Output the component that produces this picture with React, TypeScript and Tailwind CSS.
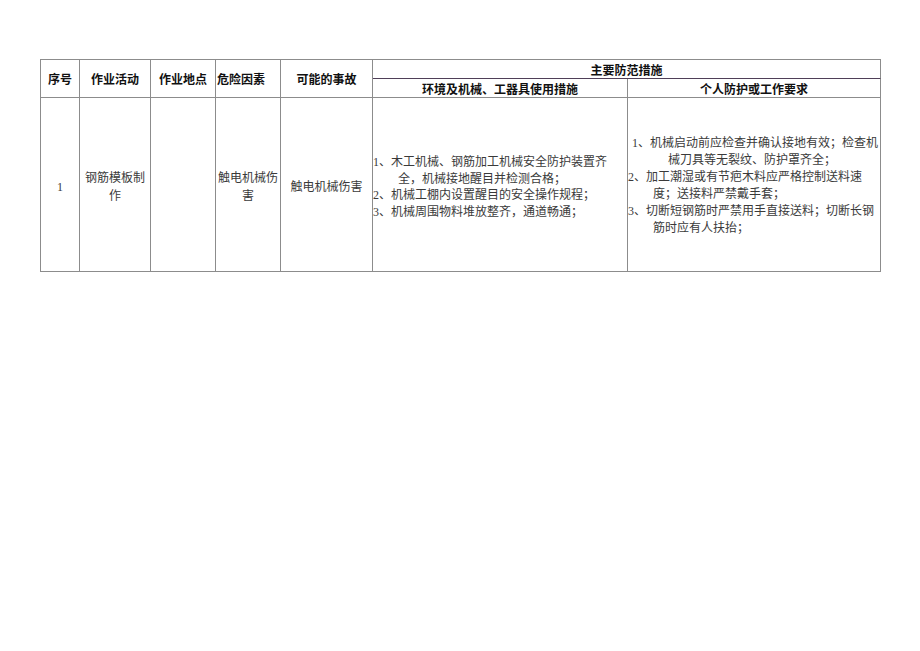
const cell = 'border-r border-b border-[#8c8c8c]';
const head = 'font-["Noto_Sans_CJK_SC",sans-serif] font-bold text-[12px] text-[#111]';
const body = 'font-["Liberation_Serif","Noto_Sans_CJK_SC",serif] text-[12px] text-[#3a3a3a]';

const envLines: [string, string][] = [
  ['1、木工机械、钢筋加工机械安全防护装置齐', 'pl-0'],
  ['全，机械接地醒目并检测合格；', 'pl-[25px]'],
  ['2、机械工棚内设置醒目的安全操作规程；', 'pl-0'],
  ['3、机械周围物料堆放整齐，通道畅通；', 'pl-0'],
];

const personLines: [string, string][] = [
  ['1、机械启动前应检查并确认接地有效；检查机', 'pl-[4px]'],
  ['械刀具等无裂纹、防护罩齐全；', 'pl-[40px]'],
  ['2、加工潮湿或有节疤木料应严格控制送料速', 'pl-0'],
  ['度；送接料严禁戴手套；', 'pl-[25px]'],
  ['3、切断短钢筋时严禁用手直接送料；切断长钢', 'pl-0'],
  ['筋时应有人扶抬；', 'pl-[25px]'],
];

const App = () => {
  return (
    <div className="min-h-screen bg-white pl-[40px] pt-[59px]">
      <div className="grid w-[841px] grid-cols-[39px_71px_65px_65px_92px_255px_253px] grid-rows-[19px_19px_174px] border-l border-t border-[#8c8c8c]">
        {/* header */}
        <div className={`${cell} ${head} row-span-2 flex items-center justify-center`}>序号</div>
        <div className={`${cell} ${head} row-span-2 flex items-center justify-center`}>作业活动</div>
        <div className={`${cell} ${head} row-span-2 flex items-center justify-center`}>作业地点</div>
        <div className={`${cell} ${head} row-span-2 flex items-center pl-px whitespace-nowrap`}>危险因素</div>
        <div className={`${cell} ${head} row-span-2 flex items-center justify-center`}>可能的事故</div>
        <div className={`border-r border-b border-r-[#8c8c8c] border-b-[#4f3f58] ${head} col-span-2 flex items-center justify-center pt-[2px]`}>
          主要防范措施
        </div>
        <div className={`${cell} ${head} flex items-center justify-center pt-[1px]`}>环境及机械、工器具使用措施</div>
        <div className={`${cell} ${head} flex items-center justify-center pt-[1px]`}>个人防护或工作要求</div>

        {/* row 1 */}
        <div className={`${cell} ${body} flex items-center justify-center pt-[4px]`}>1</div>
        <div className={`${cell} ${body} flex items-center justify-center pt-[4px] text-center leading-[18px]`}>
          钢筋模板制作
        </div>
        <div className={cell}></div>
        <div className={`${cell} ${body} flex items-center justify-center pt-[4px] text-center leading-[18px]`}>
          触电机械伤害
        </div>
        <div className={`${cell} ${body} flex items-center justify-center pt-[4px] whitespace-nowrap`}>
          触电机械伤害
        </div>
        <div className={`${cell} ${body} flex flex-col justify-center pt-[5px] leading-[16.5px]`}>
          {envLines.map(([text, pad], i) => (
            <div key={i} className={`${pad} whitespace-nowrap overflow-hidden`}>{text}</div>
          ))}
        </div>
        <div className={`${cell} ${body} flex flex-col justify-center pt-[2px] leading-[17px]`}>
          {personLines.map(([text, pad], i) => (
            <div key={i} className={`${pad} whitespace-nowrap overflow-hidden`}>{text}</div>
          ))}
        </div>
      </div>
    </div>
  );
};

export default App;
